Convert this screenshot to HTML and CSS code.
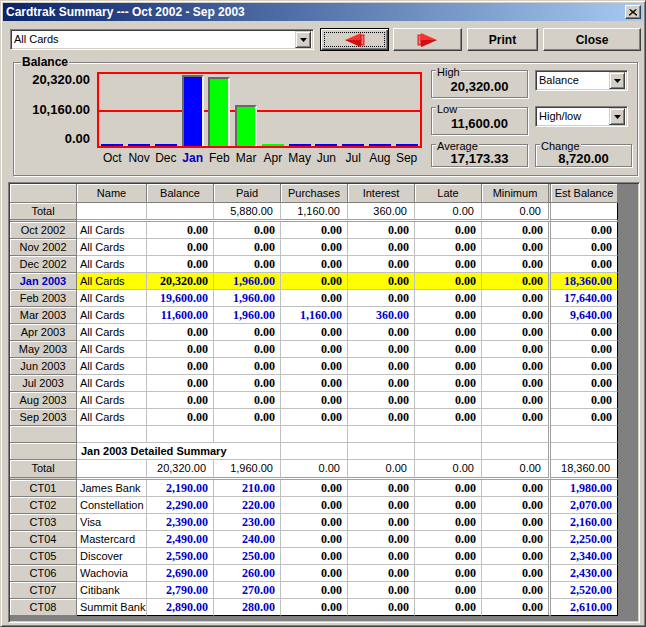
FILE: index.html
```html
<!DOCTYPE html>
<html>
<head>
<meta charset="utf-8">
<title>Cardtrak Summary</title>
<link rel="stylesheet" href="styles.css">
</head>
<body>
<div class="window">
  <div class="titlebar">
    <span class="title">Cardtrak Summary --- Oct 2002 - Sep 2003</span>
    <span class="xbtn"><svg width="8" height="7" viewBox="0 0 8 7"><path d="M0.5 0.5L7.5 6.5M1.5 0.5L8 6M7.5 0.5L0.5 6.5M6.5 0.5L0 6" stroke="#000" stroke-width="1" fill="none"/></svg></span>
  </div>

  <div class="toolbar">
    <div class="combo combo-main sunken">
      <span class="combo-text">All Cards</span>
      <span class="drop"><svg width="7" height="4" viewBox="0 0 7 4"><path d="M0 0H7L3.5 4Z" fill="#000"/></svg></span>
    </div>
    <button class="btn btn-default btn-prev"><span class="focus"><svg width="22" height="16" viewBox="0 0 22 16"><path d="M1 8L17 1V15Z" fill="#ff3030"/><path d="M1 8H17V15Z" fill="#d01010"/><rect x="17" y="3" width="3" height="10" fill="#ff7070" stroke="#c00000" stroke-width="0.8"/></svg></span></button>
    <button class="btn btn-next"><svg width="22" height="16" viewBox="0 0 22 16"><rect x="1" y="3" width="3" height="10" fill="#ff7070" stroke="#c00000" stroke-width="0.8"/><path d="M4 1L20 8L4 15Z" fill="#ff3030"/><path d="M4 8H20L4 15Z" fill="#d01010"/></svg></button>
    <button class="btn btn-print">Print</button>
    <button class="btn btn-close">Close</button>
  </div>

  <fieldset class="group">
    <legend class="group-title">Balance</legend>
    <div class="chart">
      <div class="yaxis">
        <span>20,320.00</span>
        <span>10,160.00</span>
        <span>0.00</span>
      </div>
      <div class="plotcol">
        <div class="plot">
          <div class="bar flat blue"></div>
          <div class="bar flat blue"></div>
          <div class="bar flat blue"></div>
          <div class="bar blue" style="height:71px"></div>
          <div class="bar green" style="height:69px"></div>
          <div class="bar green" style="height:41px"></div>
          <div class="bar flat green"></div>
          <div class="bar flat blue"></div>
          <div class="bar flat blue"></div>
          <div class="bar flat blue"></div>
          <div class="bar flat blue"></div>
          <div class="bar flat blue"></div>
        </div>
        <div class="months">
          <span>Oct</span><span>Nov</span><span>Dec</span><span class="cur">Jan</span><span>Feb</span><span>Mar</span><span>Apr</span><span>May</span><span>Jun</span><span>Jul</span><span>Aug</span><span>Sep</span>
        </div>
      </div>
    </div>
    <div class="stats">
      <fieldset class="stat"><legend>High</legend><div class="val">20,320.00</div></fieldset>
      <div class="combo combo-small combo-r1 sunken"><span class="combo-text">Balance</span><span class="drop"><svg width="7" height="4" viewBox="0 0 7 4"><path d="M0 0H7L3.5 4Z" fill="#000"/></svg></span></div>
      <fieldset class="stat"><legend>Low</legend><div class="val">11,600.00</div></fieldset>
      <div class="combo combo-small combo-r2 sunken"><span class="combo-text">High/low</span><span class="drop"><svg width="7" height="4" viewBox="0 0 7 4"><path d="M0 0H7L3.5 4Z" fill="#000"/></svg></span></div>
      <fieldset class="stat"><legend>Average</legend><div class="val short">17,173.33</div></fieldset>
      <fieldset class="stat"><legend>Change</legend><div class="val short">8,720.00</div></fieldset>
    </div>
  </fieldset>

  <div class="gridframe">
    <table class="grid">
      <tr class="hdr">
        <th class="w-rh"></th><th class="w-nm">Name</th><th class="w-c">Balance</th><th class="w-c">Paid</th><th class="w-c">Purchases</th><th class="w-c">Interest</th><th class="w-c">Late</th><th class="w-mn mn">Minimum</th><th class="w-c">Est Balance</th>
      </tr>
      <tr class="dbl">
        <th>Total</th><td></td><td></td><td class="n">5,880.00</td><td class="n">1,160.00</td><td class="n">360.00</td><td class="n">0.00</td><td class="n mn">0.00</td><td></td>
      </tr>
      <tr><th>Oct 2002</th><td class="nm">All Cards</td><td class="b">0.00</td><td class="b">0.00</td><td class="b">0.00</td><td class="b">0.00</td><td class="b">0.00</td><td class="b mn">0.00</td><td class="b">0.00</td></tr>
      <tr><th>Nov 2002</th><td class="nm">All Cards</td><td class="b">0.00</td><td class="b">0.00</td><td class="b">0.00</td><td class="b">0.00</td><td class="b">0.00</td><td class="b mn">0.00</td><td class="b">0.00</td></tr>
      <tr><th>Dec 2002</th><td class="nm">All Cards</td><td class="b">0.00</td><td class="b">0.00</td><td class="b">0.00</td><td class="b">0.00</td><td class="b">0.00</td><td class="b mn">0.00</td><td class="b">0.00</td></tr>
      <tr class="sel"><th class="cur">Jan 2003</th><td class="nm">All Cards</td><td class="b">20,320.00</td><td class="b blue">1,960.00</td><td class="b">0.00</td><td class="b">0.00</td><td class="b">0.00</td><td class="b mn">0.00</td><td class="b blue">18,360.00</td></tr>
      <tr><th>Feb 2003</th><td class="nm">All Cards</td><td class="b blue">19,600.00</td><td class="b blue">1,960.00</td><td class="b">0.00</td><td class="b">0.00</td><td class="b">0.00</td><td class="b mn">0.00</td><td class="b blue">17,640.00</td></tr>
      <tr><th>Mar 2003</th><td class="nm">All Cards</td><td class="b blue">11,600.00</td><td class="b blue">1,960.00</td><td class="b blue">1,160.00</td><td class="b blue">360.00</td><td class="b">0.00</td><td class="b mn">0.00</td><td class="b blue">9,640.00</td></tr>
      <tr><th>Apr 2003</th><td class="nm">All Cards</td><td class="b">0.00</td><td class="b">0.00</td><td class="b">0.00</td><td class="b">0.00</td><td class="b">0.00</td><td class="b mn">0.00</td><td class="b">0.00</td></tr>
      <tr><th>May 2003</th><td class="nm">All Cards</td><td class="b">0.00</td><td class="b">0.00</td><td class="b">0.00</td><td class="b">0.00</td><td class="b">0.00</td><td class="b mn">0.00</td><td class="b">0.00</td></tr>
      <tr><th>Jun 2003</th><td class="nm">All Cards</td><td class="b">0.00</td><td class="b">0.00</td><td class="b">0.00</td><td class="b">0.00</td><td class="b">0.00</td><td class="b mn">0.00</td><td class="b">0.00</td></tr>
      <tr><th>Jul 2003</th><td class="nm">All Cards</td><td class="b">0.00</td><td class="b">0.00</td><td class="b">0.00</td><td class="b">0.00</td><td class="b">0.00</td><td class="b mn">0.00</td><td class="b">0.00</td></tr>
      <tr><th>Aug 2003</th><td class="nm">All Cards</td><td class="b">0.00</td><td class="b">0.00</td><td class="b">0.00</td><td class="b">0.00</td><td class="b">0.00</td><td class="b mn">0.00</td><td class="b">0.00</td></tr>
      <tr><th>Sep 2003</th><td class="nm">All Cards</td><td class="b">0.00</td><td class="b">0.00</td><td class="b">0.00</td><td class="b">0.00</td><td class="b">0.00</td><td class="b mn">0.00</td><td class="b">0.00</td></tr>
      <tr><th></th><td></td><td></td><td></td><td></td><td></td><td></td><td class="mn"></td><td></td></tr>
      <tr><th></th><td class="detail" colspan="3">Jan 2003 Detailed Summary</td><td></td><td></td><td></td><td class="mn"></td><td></td></tr>
      <tr class="dbl dbl2">
        <th>Total</th><td></td><td class="n">20,320.00</td><td class="n">1,960.00</td><td class="n">0.00</td><td class="n">0.00</td><td class="n">0.00</td><td class="n mn">0.00</td><td class="n">18,360.00</td>
      </tr>
      <tr><th>CT01</th><td class="nm">James Bank</td><td class="b blue">2,190.00</td><td class="b blue">210.00</td><td class="b">0.00</td><td class="b">0.00</td><td class="b">0.00</td><td class="b mn">0.00</td><td class="b blue">1,980.00</td></tr>
      <tr><th>CT02</th><td class="nm">Constellation</td><td class="b blue">2,290.00</td><td class="b blue">220.00</td><td class="b">0.00</td><td class="b">0.00</td><td class="b">0.00</td><td class="b mn">0.00</td><td class="b blue">2,070.00</td></tr>
      <tr><th>CT03</th><td class="nm">Visa</td><td class="b blue">2,390.00</td><td class="b blue">230.00</td><td class="b">0.00</td><td class="b">0.00</td><td class="b">0.00</td><td class="b mn">0.00</td><td class="b blue">2,160.00</td></tr>
      <tr><th>CT04</th><td class="nm">Mastercard</td><td class="b blue">2,490.00</td><td class="b blue">240.00</td><td class="b">0.00</td><td class="b">0.00</td><td class="b">0.00</td><td class="b mn">0.00</td><td class="b blue">2,250.00</td></tr>
      <tr><th>CT05</th><td class="nm">Discover</td><td class="b blue">2,590.00</td><td class="b blue">250.00</td><td class="b">0.00</td><td class="b">0.00</td><td class="b">0.00</td><td class="b mn">0.00</td><td class="b blue">2,340.00</td></tr>
      <tr><th>CT06</th><td class="nm">Wachovia</td><td class="b blue">2,690.00</td><td class="b blue">260.00</td><td class="b">0.00</td><td class="b">0.00</td><td class="b">0.00</td><td class="b mn">0.00</td><td class="b blue">2,430.00</td></tr>
      <tr><th>CT07</th><td class="nm">Citibank</td><td class="b blue">2,790.00</td><td class="b blue">270.00</td><td class="b">0.00</td><td class="b">0.00</td><td class="b">0.00</td><td class="b mn">0.00</td><td class="b blue">2,520.00</td></tr>
      <tr class="last"><th>CT08</th><td class="nm">Summit Bank</td><td class="b blue">2,890.00</td><td class="b blue">280.00</td><td class="b">0.00</td><td class="b">0.00</td><td class="b">0.00</td><td class="b mn">0.00</td><td class="b blue">2,610.00</td></tr>
    </table>
  </div>
</div>
</body>
</html>
```

FILE: styles.css
```css
* { box-sizing: border-box; }
html, body { margin: 0; padding: 0; }
body {
  width: 646px;
  height: 627px;
  overflow: hidden;
  background: #d4d0c8;
  font-family: "Liberation Sans", Arial, sans-serif;
  font-size: 11px;
  color: #000;
}

.window {
  width: 646px;
  height: 627px;
  background: #d4d0c8;
  border: 1px solid;
  border-color: #d4d0c8 #404040 #404040 #d4d0c8;
  box-shadow: inset 1px 1px #fff, inset -1px -1px #808080;
  padding: 2px;
  display: flex;
  flex-direction: column;
}

/* title bar */
.titlebar {
  height: 18px;
  flex: none;
  display: flex;
  align-items: center;
  justify-content: space-between;
  padding: 0 2px 0 3px;
  background: linear-gradient(to right, #0a246a, #a6caf0);
  color: #fff;
  font-weight: bold;
  font-size: 12px;
}
.xbtn {
  width: 16px;
  height: 14px;
  background: #d4d0c8;
  border: 1px solid;
  border-color: #fff #404040 #404040 #fff;
  box-shadow: inset -1px -1px #808080;
  display: flex;
  align-items: center;
  justify-content: center;
}

/* toolbar */
.toolbar {
  flex: none;
  display: flex;
  align-items: flex-start;
  margin-top: 7px;
  padding-left: 7px;
  height: 23px;
}
.sunken {
  border: 1px solid;
  border-color: #808080 #fff #fff #808080;
  box-shadow: inset 1px 1px #404040, inset -1px -1px #d4d0c8;
}
.combo {
  display: flex;
  align-items: center;
  background: #fff;
  padding: 2px;
}
.combo-main { width: 304px; height: 21px; margin-top: 1px; }
.combo-text { flex: 1; padding-left: 1px; line-height: 15px; white-space: nowrap; }
.drop {
  width: 16px;
  height: 17px;
  flex: none;
  background: #d4d0c8;
  border: 1px solid;
  border-color: #d4d0c8 #404040 #404040 #d4d0c8;
  box-shadow: inset 1px 1px #fff, inset -1px -1px #808080;
  display: flex;
  align-items: center;
  justify-content: center;
}

.btn {
  height: 23px;
  padding: 0;
  background: #d4d0c8;
  border: 1px solid;
  border-color: #fff #404040 #404040 #fff;
  box-shadow: inset -1px -1px #808080;
  font-family: "Liberation Sans", Arial, sans-serif;
  font-weight: bold;
  font-size: 12px;
  color: #000;
  display: flex;
  align-items: center;
  justify-content: center;
}
.btn-default {
  border-color: #000;
  box-shadow: inset 1px 1px #fff, inset -1px -1px #404040, inset -2px -2px #808080;
  padding: 3px;
}
.focus {
  flex: 1;
  align-self: stretch;
  border: 1px dotted #000;
  display: flex;
  align-items: center;
  justify-content: center;
}
.btn-prev { width: 69px; margin-left: 6px; }
.btn-next { width: 69px; margin-left: 4px; }
.btn-print { width: 71px; margin-left: 5px; }
.btn-close { width: 98px; margin-left: 5px; }

/* balance group */
.group {
  flex: none;
  align-self: flex-start;
  width: 625px;
  margin: 6px 0 0 10px;
  padding: 0 0 8px 0;
  border: 1px solid #808080;
  box-shadow: inset 1px 1px #fff, 1px 1px #fff;
  display: flex;
  align-items: flex-start;
  min-width: 0;
}
.group-title {
  font-weight: bold;
  font-size: 12px;
  line-height: 10px;
  margin-left: 7px;
  padding: 0 1px;
  background: #d4d0c8;
}
.chart {
  display: flex;
  margin-top: 5px;
}
.yaxis {
  width: 76px;
  height: 76px;
  margin-right: 7px;
  display: flex;
  flex-direction: column;
  justify-content: space-between;
  align-items: flex-end;
  padding: 1px 0 3px;
  font-weight: bold;
  font-size: 13px;
  line-height: 13px;
}
.plotcol { display: flex; flex-direction: column; }
.plot {
  width: 325px;
  height: 76px;
  border: 2px solid #ff0000;
  background: linear-gradient(#ff0000, #ff0000) 0 36px / 100% 2px no-repeat;
  display: grid;
  grid-template-columns: repeat(12, 1fr);
  align-items: end;
  justify-items: center;
}
.bar {
  width: 22px;
  border-style: solid;
  border-width: 2px 2px 0 2px;
  border-color: #686868 #f0f0f0 transparent #686868;
}
.bar.flat { height: 2px; border: 0; }
.blue { background: #0000ff; }
.green { background: #00ff00; }
.months {
  width: 325px;
  padding: 0 2px;
  margin-top: 3px;
  display: grid;
  grid-template-columns: repeat(12, 1fr);
  justify-items: center;
  font-size: 12px;
  line-height: 14px;
}
.months .cur { color: #0000c0; font-weight: bold; }

.stats {
  display: grid;
  grid-template-columns: 97px 97px;
  column-gap: 7px;
  row-gap: 2px;
  margin: -4px 0 0 9px;
}
.stat {
  margin: 0;
  padding: 0;
  min-width: 0;
  border: 1px solid #808080;
  box-shadow: inset 1px 1px #fff, 1px 1px #fff;
}
.stat legend {
  font-size: 11px;
  line-height: 10px;
  margin-left: 4px;
  padding: 4px 1px 0;
  background: linear-gradient(transparent 4px, #d4d0c8 4px);
}
.val {
  text-align: center;
  font-weight: bold;
  font-size: 13px;
  line-height: 20px;
}
.val.short { line-height: 14px; padding-top: 1px; }
.combo-small { width: 93px; height: 21px; }
.combo-r1 { margin-top: 7px; }
.combo-r2 { margin-top: 6px; }

/* data grid */
.gridframe {
  flex: 1;
  margin: 6px 3px 1px 5px;
  border: 1px solid;
  border-color: #808080 #fff #fff #808080;
  box-shadow: inset 1px 1px #404040, inset -1px -1px #d4d0c8;
  padding: 1px;
  background: #808080;
  overflow: hidden;
}
.grid {
  width: 608px;
  table-layout: fixed;
  border-collapse: separate;
  border-spacing: 0;
  font-size: 11px;
}
.grid tr { height: 17px; }
.grid tr.hdr { height: 19px; }
.grid tr.dbl { height: 19px; }
.grid tr.dbl2 { height: 20px; }
.grid th, .grid td {
  padding: 0;
  white-space: nowrap;
  overflow: hidden;
  line-height: 15px;
}
.grid th {
  font-weight: normal;
  text-align: center;
  background: #d4d0c8;
  border-right: 1px solid #808080;
  border-bottom: 1px solid #808080;
  box-shadow: inset 1px 1px #fff;
}
.grid td {
  background: #fff;
  border-right: 1px solid #c0c0c0;
  border-bottom: 1px solid #c0c0c0;
  text-align: right;
  padding-right: 5px;
}
.grid td:last-child { border-right-color: #000; }
.grid tr.last td { border-bottom-color: #000; }
.grid .mn { border-right: 3px double #a0a0a0; }
.grid th.mn { border-right: 3px double #808080; }
.grid tr.dbl th { border-bottom: 3px double #808080; }
.grid tr.dbl td { border-bottom: 3px double #a0a0a0; }
.w-rh { width: 67px; }
.w-nm { width: 70px; }
.w-c { width: 67px; }
.w-mn { width: 69px; }

.grid td.nm { text-align: left; padding-left: 3px; }
.grid td.n { padding-right: 7px; }
.grid td.b {
  font-family: "Liberation Serif", "Times New Roman", serif;
  font-weight: bold;
  font-size: 12px;
}
.grid td.blue { color: #0000c8; background: #fff; }
.grid tr.sel td { background: #ffff00; }
.grid th.cur { color: #0000c0; font-weight: bold; }
.grid td.detail { text-align: left; padding-left: 4px; font-weight: bold; }
```
